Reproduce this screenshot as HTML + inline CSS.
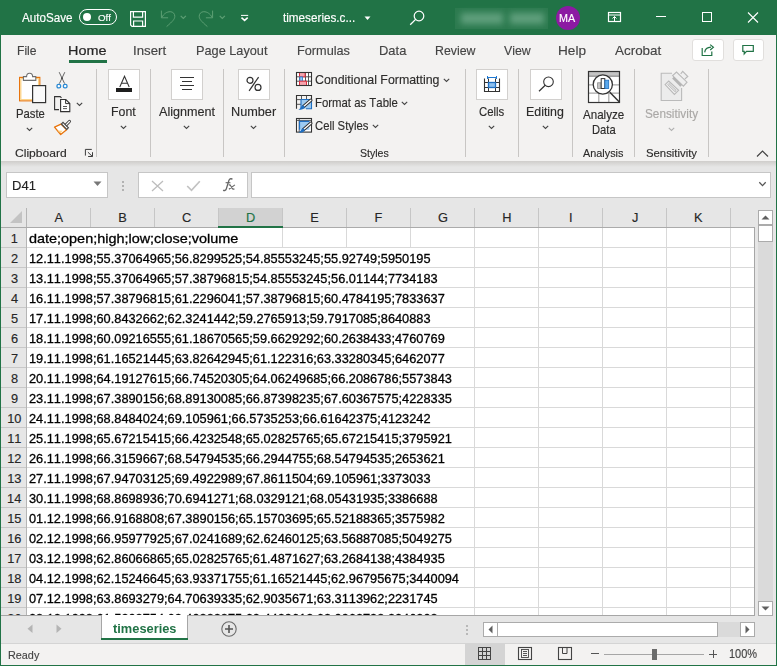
<!DOCTYPE html>
<html><head><meta charset="utf-8"><title>timeseries.csv - Excel</title>
<style>
html,body{margin:0;padding:0}
body{width:777px;height:666px;overflow:hidden;position:relative;background:#e6e6e6;font-family:"Liberation Sans",sans-serif;font-kerning:none}
.a{position:absolute;box-sizing:border-box;display:block}
.t{position:absolute;white-space:nowrap;line-height:1;font-kerning:none}
</style></head><body>
<div class="a" style="left:0px;top:0px;width:777px;height:666px;background:#e6e6e6"></div>
<div class="a" style="left:0px;top:0px;width:777px;height:35px;background:#217346"></div>
<div class="t" style="left:21.98px;top:11.59px;font-size:12.30px;color:#fff;transform:scaleX(0.9476);transform-origin:0 0;-webkit-text-stroke:0.15px #fff;">AutoSave</div>
<div class="a" style="left:79px;top:9px;width:38px;height:16px;border:1px solid #fff;border-radius:8px"></div>
<div class="a" style="left:83px;top:13px;width:8px;height:8px;background:#fff;border-radius:50%"></div>
<div class="t" style="left:97.74px;top:13.00px;font-size:9.80px;color:#fff;transform:scaleX(0.9906);transform-origin:0 0;-webkit-text-stroke:0.15px #fff;">Off</div>
<svg class="a" style="left:130px;top:11px;" width="16" height="16" viewBox="0 0 16 16"><path d="M0.6 0.6H15.4V15.4H2L0.6 14Z" fill="none" stroke="#fff" stroke-width="1.2"/><path d="M3.4 0.6V6.2H12.6V0.6" fill="none" stroke="#fff" stroke-width="1.2"/><path d="M3.6 15.4V10H12.6V15.4" fill="none" stroke="#fff" stroke-width="1.2"/></svg>
<svg class="a" style="left:197px;top:10px;" width="17" height="18" viewBox="0 0 17 18"><path d="M15.6 0.6V7.8H8.9" fill="none" stroke="#5d9f74" stroke-width="1"/><path d="M15.2 7.4C13 3.5 10 1.7 6.8 1.7C3.8 1.7 2.2 4 2.2 6.3C2.2 9 4 11 10.4 16.6" fill="none" stroke="#5d9f74" stroke-width="1"/></svg>
<svg class="a" style="left:160px;top:10px;" width="17" height="18" viewBox="0 0 17 18"><g transform="translate(17 0) scale(-1 1)"><path d="M15.6 0.6V7.8H8.9" fill="none" stroke="#5d9f74" stroke-width="1"/><path d="M15.2 7.4C13 3.5 10 1.7 6.8 1.7C3.8 1.7 2.2 4 2.2 6.3C2.2 9 4 11 10.4 16.6" fill="none" stroke="#5d9f74" stroke-width="1"/></g></svg>
<svg class="a" style="left:180px;top:15px;" width="7" height="5" viewBox="0 0 7 5"><path d="M0.7 0.8L3.3 3.4L5.9 0.8" fill="none" stroke="#5d9f74" stroke-width="1.2"/></svg>
<svg class="a" style="left:219px;top:15px;" width="7" height="5" viewBox="0 0 7 5"><path d="M0.7 0.8L3.3 3.4L5.9 0.8" fill="none" stroke="#5d9f74" stroke-width="1.2"/></svg>
<svg class="a" style="left:240px;top:14px;" width="9" height="8" viewBox="0 0 9 8"><path d="M1 1.4H8.2" stroke="#fff" stroke-width="1"/><path d="M1.5 3.6L4.6 6.4L7.7 3.6" fill="none" stroke="#fff" stroke-width="1.5"/></svg>
<div class="t" style="left:282.82px;top:11.59px;font-size:12.30px;color:#fff;transform:scaleX(0.9523);transform-origin:0 0;-webkit-text-stroke:0.15px #fff;">timeseries.c...</div>
<svg class="a" style="left:364px;top:16px;" width="7" height="5" viewBox="0 0 7 5"><path d="M0.5 0.5H6.5L3.5 4Z" fill="#fff"/></svg>
<svg class="a" style="left:409px;top:10px;" width="16" height="16" viewBox="0 0 16 16"><circle cx="10" cy="6" r="4.8" fill="none" stroke="#fff" stroke-width="1.2"/><path d="M6.6 9.4L1.2 14.8" stroke="#fff" stroke-width="1.3"/></svg>
<div class="a" style="left:455px;top:8px;width:93px;height:21px;background:#2c7a4f"></div>
<div class="a" style="left:461px;top:13px;width:42px;height:11px;background:#68a684;filter:blur(3px);opacity:.85"></div>
<div class="a" style="left:510px;top:13px;width:34px;height:11px;background:#68a684;filter:blur(3px);opacity:.85"></div>
<div class="a" style="left:556px;top:6px;width:24px;height:24px;background:#8c1aa3;border-radius:50%"></div>
<div class="t" style="left:559.12px;top:12.71px;font-size:10.50px;color:#fff;transform:scaleX(1.0223);transform-origin:0 0;-webkit-text-stroke:0.15px #fff;">MA</div>
<svg class="a" style="left:607px;top:11px;" width="15" height="12" viewBox="0 0 15 12"><rect x="1.5" y="1.5" width="12" height="9" fill="none" stroke="#fff" stroke-width="1.2"/><path d="M1.5 4H13.5" stroke="#fff" stroke-width="1"/><path d="M7.5 10V5.5M5.5 7.5L7.5 5.5L9.5 7.5" fill="none" stroke="#fff" stroke-width="1"/></svg>
<div class="a" style="left:656px;top:16px;width:10px;height:1px;background:#fff"></div>
<div class="a" style="left:702px;top:12px;width:10px;height:10px;border:1px solid #fff"></div>
<svg class="a" style="left:747px;top:12px;" width="12" height="11" viewBox="0 0 12 11"><path d="M1 0.5L11 10.5M11 0.5L1 10.5" stroke="#fff" stroke-width="1.1"/></svg>
<div class="a" style="left:1px;top:35px;width:775px;height:126px;background:#f3f2f1"></div>
<div class="t" style="left:17.41px;top:44.22px;font-size:13.20px;color:#444;transform:scaleX(0.9184);transform-origin:0 0;-webkit-text-stroke:0.15px #444;">File</div>
<div class="t" style="left:68.02px;top:44.22px;font-size:13.20px;color:#262626;transform:scaleX(1.0942);transform-origin:0 0;-webkit-text-stroke:0.2px #262626;">Home</div>
<div class="t" style="left:132.68px;top:44.22px;font-size:13.20px;color:#444;transform:scaleX(1.0032);transform-origin:0 0;-webkit-text-stroke:0.15px #444;">Insert</div>
<div class="t" style="left:196.16px;top:44.22px;font-size:13.20px;color:#444;transform:scaleX(0.9651);transform-origin:0 0;-webkit-text-stroke:0.15px #444;">Page Layout</div>
<div class="t" style="left:297.46px;top:44.22px;font-size:13.20px;color:#444;transform:scaleX(0.9635);transform-origin:0 0;-webkit-text-stroke:0.15px #444;">Formulas</div>
<div class="t" style="left:378.94px;top:44.22px;font-size:13.20px;color:#444;transform:scaleX(0.9814);transform-origin:0 0;-webkit-text-stroke:0.15px #444;">Data</div>
<div class="t" style="left:435.29px;top:44.22px;font-size:13.20px;color:#444;transform:scaleX(0.9354);transform-origin:0 0;-webkit-text-stroke:0.15px #444;">Review</div>
<div class="t" style="left:503.95px;top:44.22px;font-size:13.20px;color:#444;transform:scaleX(0.9341);transform-origin:0 0;-webkit-text-stroke:0.15px #444;">View</div>
<div class="t" style="left:557.88px;top:44.22px;font-size:13.20px;color:#444;transform:scaleX(1.0309);transform-origin:0 0;-webkit-text-stroke:0.15px #444;">Help</div>
<div class="t" style="left:614.77px;top:44.22px;font-size:13.20px;color:#444;transform:scaleX(1.0183);transform-origin:0 0;-webkit-text-stroke:0.15px #444;">Acrobat</div>
<div class="a" style="left:69px;top:60px;width:38px;height:3px;background:#217346"></div>
<div class="a" style="left:692px;top:39px;width:32px;height:22px;background:#fff;border:1px solid #e1dfdd;border-radius:3px"></div>
<svg class="a" style="left:700px;top:42px;" width="16" height="16" viewBox="0 0 16 16"><path d="M2.2 5.9V13.5H11.8V9.4" fill="none" stroke="#217346" stroke-width="1.2"/><path d="M4.7 10.4C5 7.4 7 5.4 11 5.2" fill="none" stroke="#217346" stroke-width="1.2"/><path d="M10.2 2.6L13.4 5.3L10.2 8" fill="none" stroke="#217346" stroke-width="1.2"/></svg>
<div class="a" style="left:733px;top:39px;width:31px;height:22px;background:#fff;border:1px solid #e1dfdd;border-radius:3px"></div>
<svg class="a" style="left:741px;top:43px;" width="15" height="14" viewBox="0 0 15 14"><path d="M1.8 2.5H12.3V8.4H5.5L3.2 11V8.4H1.8Z" fill="none" stroke="#217346" stroke-width="1.2"/></svg>
<div class="a" style="left:96px;top:69px;width:1px;height:88px;background:#c8c6c4"></div>
<div class="a" style="left:150px;top:69px;width:1px;height:88px;background:#c8c6c4"></div>
<div class="a" style="left:223px;top:69px;width:1px;height:88px;background:#c8c6c4"></div>
<div class="a" style="left:284px;top:69px;width:1px;height:88px;background:#c8c6c4"></div>
<div class="a" style="left:465px;top:69px;width:1px;height:88px;background:#c8c6c4"></div>
<div class="a" style="left:518px;top:69px;width:1px;height:88px;background:#c8c6c4"></div>
<div class="a" style="left:572px;top:69px;width:1px;height:88px;background:#c8c6c4"></div>
<div class="a" style="left:634px;top:69px;width:1px;height:88px;background:#c8c6c4"></div>
<div class="a" style="left:708px;top:69px;width:1px;height:88px;background:#c8c6c4"></div>
<svg class="a" style="left:17px;top:71px;" width="31" height="33" viewBox="0 0 31 33"><rect x="2.6" y="6.4" width="20.2" height="23.4" fill="#fff" stroke="#e8740c" stroke-width="1.2"/>
<path d="M3.8 7.6H21.6V14M3.8 7.6V28.6H15" fill="none" stroke="#fcd48a" stroke-width="1.3"/>
<path d="M6.4 9.4V5.6H9.6C9.6 3.4 10.8 2.2 12.6 2.2C14.4 2.2 15.6 3.4 15.6 5.6H18.8V9.4Z" fill="#fff" stroke="#6e6e6e" stroke-width="1.1"/>
<rect x="15.6" y="14.6" width="13" height="17" fill="#fafafa" stroke="#333" stroke-width="1.2"/></svg>
<div class="t" style="left:15.78px;top:108.16px;font-size:12.80px;color:#2d2c2b;transform:scaleX(0.8807);transform-origin:0 0;-webkit-text-stroke:0.15px #2d2c2b;">Paste</div>
<svg class="a" style="left:26px;top:127px;" width="7" height="5" viewBox="0 0 7 5"><path d="M0.8 0.8L3.5 3.5L6.2 0.8" fill="none" stroke="#444" stroke-width="1.1"/></svg>
<svg class="a" style="left:55px;top:71px;" width="14" height="18" viewBox="0 0 14 18"><path d="M4.2 1.2L9.6 12.6M9.8 1.2L4.4 12.6" stroke="#555" stroke-width="0.9"/><circle cx="7" cy="7.2" r="0.9" fill="#444"/><rect x="2" y="13.3" width="3.6" height="3.6" rx="1.4" fill="#fff" stroke="#2a8ad4" stroke-width="1.3"/><rect x="8.4" y="13.3" width="3.6" height="3.6" rx="1.4" fill="#fff" stroke="#2a8ad4" stroke-width="1.3"/></svg>
<svg class="a" style="left:52px;top:94px;" width="20" height="20" viewBox="0 0 20 20"><path d="M7 15.6H2.6V2.6H8.2L9.5 3.8" fill="none" stroke="#333" stroke-width="1.1"/><path d="M8.6 5.5H13.8L17.8 9.5V17.6H8.6Z" fill="#fff" stroke="#333" stroke-width="1.1"/><path d="M13.6 5.5V9.6H17.8" fill="none" stroke="#333" stroke-width="1"/><path d="M11 12.5H15M11 14.6H15" stroke="#444" stroke-width="0.9"/></svg>
<svg class="a" style="left:76px;top:102px;" width="7" height="5" viewBox="0 0 7 5"><path d="M0.8 0.8L3.5 3.5L6.2 0.8" fill="none" stroke="#444" stroke-width="1.1"/></svg>
<svg class="a" style="left:52px;top:118px;" width="20" height="19" viewBox="0 0 20 19"><path d="M2.5 9.2L9 6.1L14.6 11.7L8.7 16.5Z" fill="#fff" stroke="#e8740c" stroke-width="1.3" stroke-linejoin="round"/><path d="M5.2 12.6L10.6 12.8L8.6 15.2Z" fill="#fcd48a"/><path d="M13.6 7.4L17.4 3.5" stroke="#444" stroke-width="3.2" stroke-linecap="round"/><path d="M13.6 7.4L17.4 3.5" stroke="#fff" stroke-width="1.2" stroke-linecap="round"/><path d="M9.4 6L14.8 11.4L16.4 9.8L11 4.4Z" fill="#fff" stroke="#444" stroke-width="1.1"/></svg>
<div class="t" style="left:14.89px;top:146.78px;font-size:11.60px;color:#2d2c2b;transform:scaleX(1.0411);transform-origin:0 0;-webkit-text-stroke:0.15px #2d2c2b;">Clipboard</div>
<svg class="a" style="left:84px;top:148px;" width="10" height="10" viewBox="0 0 10 10"><path d="M1.4 7.6V1.4H7.8M3.9 4.2L8.3 8.4M8.5 4.2V8.5H4.1" fill="none" stroke="#333" stroke-width="0.95"/></svg>
<div class="a" style="left:108px;top:69px;width:32px;height:31px;background:#fff;border:1px solid #d2d0ce"></div>
<svg class="a" style="left:118px;top:75px;" width="14" height="13" viewBox="0 0 14 13"><path d="M1.8 12L6.5 1.2L11.2 12M3.6 8.2H9.4" fill="none" stroke="#333" stroke-width="1.05"/></svg>
<div class="a" style="left:116px;top:88px;width:16px;height:4px;background:#1e1e1e"></div>
<div class="t" style="left:110.99px;top:106.16px;font-size:12.80px;color:#2d2c2b;transform:scaleX(0.9645);transform-origin:0 0;-webkit-text-stroke:0.15px #2d2c2b;">Font</div>
<svg class="a" style="left:120px;top:125px;" width="7" height="5" viewBox="0 0 7 5"><path d="M0.8 0.8L3.5 3.5L6.2 0.8" fill="none" stroke="#444" stroke-width="1.1"/></svg>
<div class="a" style="left:171px;top:69px;width:32px;height:31px;background:#fff;border:1px solid #d2d0ce"></div>
<svg class="a" style="left:179px;top:76px;" width="16" height="15" viewBox="0 0 16 15"><path d="M1 1.5H15M3 5.5H13M1 9.5H15M3 13.5H13" stroke="#333" stroke-width="1"/></svg>
<div class="t" style="left:158.98px;top:106.16px;font-size:12.80px;color:#2d2c2b;transform:scaleX(0.9859);transform-origin:0 0;-webkit-text-stroke:0.15px #2d2c2b;">Alignment</div>
<svg class="a" style="left:183px;top:125px;" width="7" height="5" viewBox="0 0 7 5"><path d="M0.8 0.8L3.5 3.5L6.2 0.8" fill="none" stroke="#444" stroke-width="1.1"/></svg>
<div class="a" style="left:238px;top:69px;width:32px;height:31px;background:#fff;border:1px solid #d2d0ce"></div>
<svg class="a" style="left:244px;top:73px;" width="20" height="20" viewBox="0 0 20 20"><circle cx="6" cy="7.3" r="3" fill="none" stroke="#333" stroke-width="1.2"/><circle cx="14" cy="14.4" r="3" fill="none" stroke="#333" stroke-width="1.2"/><path d="M14.6 4.1L5.1 17.9" stroke="#333" stroke-width="1.2"/></svg>
<div class="t" style="left:231.26px;top:106.16px;font-size:12.80px;color:#2d2c2b;transform:scaleX(0.9918);transform-origin:0 0;-webkit-text-stroke:0.15px #2d2c2b;">Number</div>
<svg class="a" style="left:250px;top:125px;" width="7" height="5" viewBox="0 0 7 5"><path d="M0.8 0.8L3.5 3.5L6.2 0.8" fill="none" stroke="#444" stroke-width="1.1"/></svg>
<svg class="a" style="left:295px;top:71px;" width="18" height="16" viewBox="0 0 18 16"><rect x="1.5" y="1.5" width="15" height="13" fill="#fff"/>
<path d="M4.5 1.5V14.5M10.5 1.5V14.5M13.5 1.5V14.5M1.5 5.8H16.5M1.5 10.2H16.5" stroke="#444" stroke-width="0.9"/>
<rect x="4.5" y="1.5" width="5.6" height="4.3" fill="#f6a3ad" stroke="#e02f3f" stroke-width="1"/>
<rect x="4.8" y="5.9" width="2.6" height="4.2" fill="#9ccaf2" stroke="#2a7ed0" stroke-width="0.9"/>
<rect x="4.5" y="10.2" width="7" height="4.3" fill="#f6a3ad" stroke="#e02f3f" stroke-width="1"/>
<rect x="1.5" y="1.5" width="15" height="13" fill="none" stroke="#333" stroke-width="1.1"/></svg>
<div class="t" style="left:314.87px;top:73.76px;font-size:12.80px;color:#2d2c2b;transform:scaleX(0.9670);transform-origin:0 0;-webkit-text-stroke:0.15px #2d2c2b;">Conditional Formatting</div>
<svg class="a" style="left:442.5px;top:77.5px;" width="7" height="5" viewBox="0 0 7 5"><path d="M0.8 0.8L3.5 3.5L6.2 0.8" fill="none" stroke="#444" stroke-width="1.1"/></svg>
<svg class="a" style="left:295px;top:94px;" width="18" height="17" viewBox="0 0 18 17"><path d="M1.5 14.7V1.5H16.5V5.5" fill="none" stroke="#333" stroke-width="1.1"/>
<path d="M6.5 1.5V5.5M11.5 1.5V5.5M1.5 5.6H6M1.5 10.3H6" stroke="#444" stroke-width="0.9"/>
<rect x="6" y="5.5" width="10.5" height="9.2" fill="#9dcbf2"/><path d="M6 14.7V5.5H16.5V14.7H11" fill="none" stroke="#1f6fc2" stroke-width="1.1"/><path d="M15.8 6.3L8.6 12.6" stroke="#333" stroke-width="3.3" stroke-linecap="round"/><path d="M15.8 6.3L8.6 12.6" stroke="#fff" stroke-width="1.3" stroke-linecap="round"/><path d="M3.4 15.9C6.4 15.9 9.4 15 9.9 12.8L8.2 11.3C6.2 11.9 5.6 14.6 3.4 15.9Z" fill="#1f6fc2"/></svg>
<div class="t" style="left:314.57px;top:97.36px;font-size:12.80px;color:#2d2c2b;transform:scaleX(0.8889);transform-origin:0 0;-webkit-text-stroke:0.15px #2d2c2b;">Format as Table</div>
<svg class="a" style="left:400.5px;top:100.5px;" width="7" height="5" viewBox="0 0 7 5"><path d="M0.8 0.8L3.5 3.5L6.2 0.8" fill="none" stroke="#444" stroke-width="1.1"/></svg>
<svg class="a" style="left:295px;top:117px;" width="18" height="17" viewBox="0 0 18 17"><rect x="1.5" y="1.5" width="15" height="13.6" fill="#fff" stroke="#333" stroke-width="1.1"/><path d="M1.5 3.4H16.5M4.2 1.5V15" stroke="#444" stroke-width="0.9"/>
<rect x="4.5" y="4.4" width="10" height="8.4" fill="#9dcbf2"/><path d="M4.5 12.8V4.4H14.5" fill="none" stroke="#1f6fc2" stroke-width="1.2"/><path d="M15.8 6.3L8.6 12.6" stroke="#333" stroke-width="3.3" stroke-linecap="round"/><path d="M15.8 6.3L8.6 12.6" stroke="#fff" stroke-width="1.3" stroke-linecap="round"/><path d="M3.4 15.9C6.4 15.9 9.4 15 9.9 12.8L8.2 11.3C6.2 11.9 5.6 14.6 3.4 15.9Z" fill="#1f6fc2"/></svg>
<div class="t" style="left:314.93px;top:120.16px;font-size:12.80px;color:#2d2c2b;transform:scaleX(0.8829);transform-origin:0 0;-webkit-text-stroke:0.15px #2d2c2b;">Cell Styles</div>
<svg class="a" style="left:371.5px;top:123.5px;" width="7" height="5" viewBox="0 0 7 5"><path d="M0.8 0.8L3.5 3.5L6.2 0.8" fill="none" stroke="#444" stroke-width="1.1"/></svg>
<div class="t" style="left:360.22px;top:146.78px;font-size:11.60px;color:#2d2c2b;transform:scaleX(0.9105);transform-origin:0 0;-webkit-text-stroke:0.15px #2d2c2b;">Styles</div>
<div class="a" style="left:476px;top:69px;width:32px;height:31px;background:#fff;border:1px solid #d2d0ce"></div>
<svg class="a" style="left:482px;top:75px;" width="20" height="18" viewBox="0 0 20 18"><path d="M5.5 2.5H14.5M5.5 1V4M14.5 1V4" stroke="#1f78d1" stroke-width="1"/>
<path d="M2.5 3.5V16.5H17.5V3.5" fill="none" stroke="#333" stroke-width="1.1"/><path d="M6.5 3.5V16.5M13.5 3.5V16.5M2.5 7.5H17.5M2.5 12.5H17.5" stroke="#333" stroke-width="1"/>
<rect x="6.5" y="7.5" width="7" height="5" fill="#8ec0ee" stroke="#1f6fc2" stroke-width="1.3"/></svg>
<div class="t" style="left:479.02px;top:106.16px;font-size:12.80px;color:#2d2c2b;transform:scaleX(0.8889);transform-origin:0 0;-webkit-text-stroke:0.15px #2d2c2b;">Cells</div>
<svg class="a" style="left:488px;top:125px;" width="7" height="5" viewBox="0 0 7 5"><path d="M0.8 0.8L3.5 3.5L6.2 0.8" fill="none" stroke="#444" stroke-width="1.1"/></svg>
<div class="a" style="left:530px;top:69px;width:32px;height:31px;background:#fff;border:1px solid #d2d0ce"></div>
<svg class="a" style="left:538px;top:76px;" width="17" height="16" viewBox="0 0 17 16"><circle cx="10.5" cy="5.8" r="4.8" fill="none" stroke="#333" stroke-width="1.1"/><path d="M7.2 9.2L1 15.2" stroke="#333" stroke-width="1.2"/></svg>
<div class="t" style="left:526.48px;top:106.16px;font-size:12.80px;color:#2d2c2b;transform:scaleX(0.9688);transform-origin:0 0;-webkit-text-stroke:0.15px #2d2c2b;">Editing</div>
<svg class="a" style="left:542px;top:125px;" width="7" height="5" viewBox="0 0 7 5"><path d="M0.8 0.8L3.5 3.5L6.2 0.8" fill="none" stroke="#444" stroke-width="1.1"/></svg>
<svg class="a" style="left:587px;top:70px;" width="34" height="34" viewBox="0 0 34 34"><rect x="1.5" y="1.5" width="31" height="31" fill="#fff"/>
<rect x="1.5" y="1.5" width="31" height="4.6" fill="#c4c4c4"/><path d="M1.5 6.2H32.5" stroke="#7a7a7a" stroke-width="1"/>
<path d="M1.5 14.8H32.5M1.5 23.2H32.5M11.8 23.2V32.5M21.8 23.2V32.5" stroke="#a8a8a8" stroke-width="1.2"/>
<rect x="1.5" y="1.5" width="31" height="31" fill="none" stroke="#333" stroke-width="1.2"/>
<circle cx="15.8" cy="14.5" r="9.6" fill="#fff" stroke="#333" stroke-width="1.3"/>
<path d="M22.8 22.3L32.6 32.2" stroke="#333" stroke-width="1.5"/>
<rect x="10.6" y="12.8" width="3.5" height="5.7" fill="#c4c4c4" stroke="#8a8a8a" stroke-width="0.8"/>
<rect x="14.2" y="8.6" width="3.6" height="9.9" fill="#fff" stroke="#333" stroke-width="1"/>
<rect x="17.9" y="10.2" width="3.8" height="8.3" fill="#5aa8ec" stroke="#1f6fc2" stroke-width="0.8"/></svg>
<div class="t" style="left:583.28px;top:109.46px;font-size:12.80px;color:#2d2c2b;transform:scaleX(0.9056);transform-origin:0 0;-webkit-text-stroke:0.15px #2d2c2b;">Analyze</div>
<div class="t" style="left:591.68px;top:124.06px;font-size:12.80px;color:#2d2c2b;transform:scaleX(0.8735);transform-origin:0 0;-webkit-text-stroke:0.15px #2d2c2b;">Data</div>
<div class="t" style="left:583.28px;top:146.78px;font-size:11.60px;color:#2d2c2b;transform:scaleX(0.9356);transform-origin:0 0;-webkit-text-stroke:0.15px #2d2c2b;">Analysis</div>
<svg class="a" style="left:658px;top:70px;" width="32" height="32" viewBox="0 0 32 32"><path d="M3.2 3.2H14L23.6 13V30.5H3.2Z" fill="#ececec"/>
<path d="M14 3.2H3.2V30.5H23.6V17.9" fill="none" stroke="#bababa" stroke-width="1.1"/>
<path d="M7.1 14.6L10.7 11L20.6 20.3L16.4 24.5Z" fill="#efefef" stroke="#b9b9b9" stroke-width="1.1"/>
<path d="M9.8 14.6L10.9 13.5L18.2 20.5L17 21.6Z" fill="none" stroke="#b4b4b4" stroke-width="1"/>
<path d="M14.6 5.6L18.5 2L29 12.2L25.4 16.1Z" fill="#efefef" stroke="#b9b9b9" stroke-width="1.1"/>
<path d="M15 7.6L23.2 15.8" stroke="#b4b4b4" stroke-width="2.4"/>
<path d="M22.7 3.8L24.7 1.4L29.8 6.5L26.8 9" fill="#efefef" stroke="#b9b9b9" stroke-width="1.1"/></svg>
<div class="t" style="left:644.86px;top:107.66px;font-size:12.80px;color:#aaa8a6;transform:scaleX(0.9209);transform-origin:0 0;-webkit-text-stroke:0.15px #aaa8a6;">Sensitivity</div>
<svg class="a" style="left:668px;top:127px;" width="7" height="5" viewBox="0 0 7 5"><path d="M0.8 0.8L3.5 3.5L6.2 0.8" fill="none" stroke="#b0b0b0" stroke-width="1.1"/></svg>
<div class="t" style="left:645.99px;top:146.78px;font-size:11.60px;color:#2d2c2b;transform:scaleX(0.9774);transform-origin:0 0;-webkit-text-stroke:0.15px #2d2c2b;">Sensitivity</div>
<svg class="a" style="left:756px;top:150px;" width="13" height="8" viewBox="0 0 13 8"><path d="M1 6.5L6.5 1L12 6.5" fill="none" stroke="#444" stroke-width="1.2"/></svg>
<div class="a" style="left:1px;top:161px;width:775px;height:6px;background:linear-gradient(#cfcdcb,#e6e6e6)"></div>
<div class="a" style="left:6px;top:172px;width:102px;height:26px;background:#fff;border:1px solid #c6c6c6"></div>
<div class="t" style="left:12.33px;top:180.26px;font-size:12.80px;color:#222;transform:scaleX(1.0181);transform-origin:0 0;-webkit-text-stroke:0.15px #222;">D41</div>
<svg class="a" style="left:93px;top:181px;" width="9" height="6" viewBox="0 0 9 6"><path d="M0.5 0.5H8.5L4.5 5Z" fill="#777"/></svg>
<div class="a" style="left:122px;top:180.5px;width:2px;height:2px;background:#a0a0a0;border-radius:1px"></div>
<div class="a" style="left:122px;top:184.5px;width:2px;height:2px;background:#a0a0a0;border-radius:1px"></div>
<div class="a" style="left:122px;top:188.5px;width:2px;height:2px;background:#a0a0a0;border-radius:1px"></div>
<div class="a" style="left:138px;top:172px;width:110px;height:26px;background:#fff;border:1px solid #c6c6c6"></div>
<svg class="a" style="left:151px;top:180px;" width="13" height="12" viewBox="0 0 13 12"><path d="M1 1L12 11M12 1L1 11" stroke="#bdbdbd" stroke-width="1.3"/></svg>
<svg class="a" style="left:186px;top:179px;" width="15" height="13" viewBox="0 0 15 13"><path d="M1.2 7L5.5 11.3L13.8 2.2" fill="none" stroke="#c2c2c2" stroke-width="1.7"/></svg>
<svg class="a" style="left:220px;top:176px;" width="18" height="18" viewBox="0 0 18 18"><path d="M12.4 3.4C11.7 2.4 9.6 2.3 8.9 4.4L6.4 12.6C5.9 14.5 4.4 15 3.2 14.1" fill="none" stroke="#666" stroke-width="1.35"/><path d="M5.6 6.7H10.4" stroke="#666" stroke-width="1.1"/><path d="M8.6 9C9.8 8.6 10.4 9 10.9 10L12.2 12.4C12.6 13.1 13.3 13.3 14.4 12.9M14.9 8.9L8.9 13.2" fill="none" stroke="#666" stroke-width="1.15"/></svg>
<div class="a" style="left:251px;top:172px;width:520px;height:26px;background:#fff;border:1px solid #c6c6c6"></div>
<svg class="a" style="left:758px;top:181px;" width="9" height="7" viewBox="0 0 9 7"><path d="M1.3 1.3L4.5 4.6L7.7 1.3" fill="none" stroke="#555" stroke-width="1.3"/></svg>
<div class="a" style="left:1px;top:208px;width:753px;height:20px;background:#e6e6e6"></div>
<svg class="a" style="left:8px;top:209px;" width="18" height="18" viewBox="0 0 18 18"><path d="M14 2V14H2Z" fill="#c3c3c3"/></svg>
<div class="a" style="left:26px;top:208px;width:1px;height:20px;background:#b5b5b5"></div>
<div class="a" style="left:90px;top:208px;width:1px;height:20px;background:#c6c6c6"></div>
<div class="a" style="left:154px;top:208px;width:1px;height:20px;background:#c6c6c6"></div>
<div class="a" style="left:218px;top:208px;width:1px;height:20px;background:#c6c6c6"></div>
<div class="a" style="left:219px;top:208px;width:63px;height:18px;background:#d2d2d2"></div>
<div class="a" style="left:219px;top:226px;width:64px;height:2px;background:#217346"></div>
<div class="a" style="left:282px;top:208px;width:1px;height:20px;background:#c6c6c6"></div>
<div class="a" style="left:346px;top:208px;width:1px;height:20px;background:#c6c6c6"></div>
<div class="a" style="left:410px;top:208px;width:1px;height:20px;background:#c6c6c6"></div>
<div class="a" style="left:474px;top:208px;width:1px;height:20px;background:#c6c6c6"></div>
<div class="a" style="left:538px;top:208px;width:1px;height:20px;background:#c6c6c6"></div>
<div class="a" style="left:602px;top:208px;width:1px;height:20px;background:#c6c6c6"></div>
<div class="a" style="left:666px;top:208px;width:1px;height:20px;background:#c6c6c6"></div>
<div class="a" style="left:730px;top:208px;width:1px;height:20px;background:#c6c6c6"></div>
<div class="a" style="left:1px;top:227px;width:753px;height:1px;background:#ababab"></div>
<div class="a" style="left:218px;top:226px;width:65px;height:2px;background:#217346"></div>
<div class="t" style="left:54.53px;top:212.16px;font-size:12.80px;color:#262626;-webkit-text-stroke:0.15px #262626;">A</div>
<div class="t" style="left:118.34px;top:212.16px;font-size:12.80px;color:#262626;-webkit-text-stroke:0.15px #262626;">B</div>
<div class="t" style="left:182.10px;top:212.16px;font-size:12.80px;color:#262626;-webkit-text-stroke:0.15px #262626;">C</div>
<div class="t" style="left:245.96px;top:212.16px;font-size:12.80px;color:#217346;-webkit-text-stroke:0.15px #217346;">D</div>
<div class="t" style="left:310.28px;top:212.16px;font-size:12.80px;color:#262626;-webkit-text-stroke:0.15px #262626;">E</div>
<div class="t" style="left:374.62px;top:212.16px;font-size:12.80px;color:#262626;-webkit-text-stroke:0.15px #262626;">F</div>
<div class="t" style="left:437.98px;top:212.16px;font-size:12.80px;color:#262626;-webkit-text-stroke:0.15px #262626;">G</div>
<div class="t" style="left:502.18px;top:212.16px;font-size:12.80px;color:#262626;-webkit-text-stroke:0.15px #262626;">H</div>
<div class="t" style="left:569.02px;top:212.16px;font-size:12.80px;color:#262626;-webkit-text-stroke:0.15px #262626;">I</div>
<div class="t" style="left:631.97px;top:212.16px;font-size:12.80px;color:#262626;-webkit-text-stroke:0.15px #262626;">J</div>
<div class="t" style="left:694.08px;top:212.16px;font-size:12.80px;color:#262626;-webkit-text-stroke:0.15px #262626;">K</div>
<div class="a" style="left:27px;top:228px;width:727px;height:387px;background:#fff"></div>
<div class="a" style="left:1px;top:228px;width:25px;height:387px;background:#e6e6e6"></div>
<div class="a" style="left:26px;top:228px;width:1px;height:387px;background:#b5b5b5"></div>
<div class="a" style="left:282px;top:228px;width:1px;height:20px;background:#d9d9d9"></div>
<div class="a" style="left:346px;top:228px;width:1px;height:20px;background:#d9d9d9"></div>
<div class="a" style="left:410px;top:228px;width:1px;height:20px;background:#d9d9d9"></div>
<div class="a" style="left:474px;top:228px;width:1px;height:20px;background:#d9d9d9"></div>
<div class="a" style="left:538px;top:228px;width:1px;height:20px;background:#d9d9d9"></div>
<div class="a" style="left:602px;top:228px;width:1px;height:20px;background:#d9d9d9"></div>
<div class="a" style="left:666px;top:228px;width:1px;height:20px;background:#d9d9d9"></div>
<div class="a" style="left:730px;top:228px;width:1px;height:20px;background:#d9d9d9"></div>
<div class="a" style="left:27px;top:247px;width:727px;height:1px;background:#d9d9d9"></div>
<div class="a" style="left:1px;top:247px;width:25px;height:1px;background:#c8c8c8"></div>
<div class="t" style="left:28.99px;top:231.57px;font-size:13.50px;color:#000;-webkit-text-stroke:0.3px #000;transform:scaleX(1.0683);transform-origin:0 0">date;open;high;low;close;volume</div>
<div class="t" style="left:10.77px;top:233.16px;font-size:12.80px;color:#262626;-webkit-text-stroke:0.15px #262626;">1</div>
<div class="a" style="left:474px;top:248px;width:1px;height:20px;background:#d9d9d9"></div>
<div class="a" style="left:538px;top:248px;width:1px;height:20px;background:#d9d9d9"></div>
<div class="a" style="left:602px;top:248px;width:1px;height:20px;background:#d9d9d9"></div>
<div class="a" style="left:666px;top:248px;width:1px;height:20px;background:#d9d9d9"></div>
<div class="a" style="left:730px;top:248px;width:1px;height:20px;background:#d9d9d9"></div>
<div class="a" style="left:27px;top:267px;width:727px;height:1px;background:#d9d9d9"></div>
<div class="a" style="left:1px;top:267px;width:25px;height:1px;background:#c8c8c8"></div>
<div class="t" style="left:28.63px;top:251.57px;font-size:13.50px;color:#000;-webkit-text-stroke:0.3px #000;transform:scaleX(0.9466);transform-origin:0 0">12.11.1998;55.37064965;56.8299525;54.85553245;55.92749;5950195</div>
<div class="t" style="left:10.94px;top:253.16px;font-size:12.80px;color:#262626;-webkit-text-stroke:0.15px #262626;">2</div>
<div class="a" style="left:474px;top:268px;width:1px;height:20px;background:#d9d9d9"></div>
<div class="a" style="left:538px;top:268px;width:1px;height:20px;background:#d9d9d9"></div>
<div class="a" style="left:602px;top:268px;width:1px;height:20px;background:#d9d9d9"></div>
<div class="a" style="left:666px;top:268px;width:1px;height:20px;background:#d9d9d9"></div>
<div class="a" style="left:730px;top:268px;width:1px;height:20px;background:#d9d9d9"></div>
<div class="a" style="left:27px;top:287px;width:727px;height:1px;background:#d9d9d9"></div>
<div class="a" style="left:1px;top:287px;width:25px;height:1px;background:#c8c8c8"></div>
<div class="t" style="left:28.63px;top:271.57px;font-size:13.50px;color:#000;-webkit-text-stroke:0.3px #000;transform:scaleX(0.9466);transform-origin:0 0">13.11.1998;55.37064965;57.38796815;54.85553245;56.01144;7734183</div>
<div class="t" style="left:10.98px;top:273.16px;font-size:12.80px;color:#262626;-webkit-text-stroke:0.15px #262626;">3</div>
<div class="a" style="left:474px;top:288px;width:1px;height:20px;background:#d9d9d9"></div>
<div class="a" style="left:538px;top:288px;width:1px;height:20px;background:#d9d9d9"></div>
<div class="a" style="left:602px;top:288px;width:1px;height:20px;background:#d9d9d9"></div>
<div class="a" style="left:666px;top:288px;width:1px;height:20px;background:#d9d9d9"></div>
<div class="a" style="left:730px;top:288px;width:1px;height:20px;background:#d9d9d9"></div>
<div class="a" style="left:27px;top:307px;width:727px;height:1px;background:#d9d9d9"></div>
<div class="a" style="left:1px;top:307px;width:25px;height:1px;background:#c8c8c8"></div>
<div class="t" style="left:28.63px;top:291.57px;font-size:13.50px;color:#000;-webkit-text-stroke:0.3px #000;transform:scaleX(0.9466);transform-origin:0 0">16.11.1998;57.38796815;61.2296041;57.38796815;60.4784195;7833637</div>
<div class="t" style="left:10.98px;top:293.16px;font-size:12.80px;color:#262626;-webkit-text-stroke:0.15px #262626;">4</div>
<div class="a" style="left:474px;top:308px;width:1px;height:20px;background:#d9d9d9"></div>
<div class="a" style="left:538px;top:308px;width:1px;height:20px;background:#d9d9d9"></div>
<div class="a" style="left:602px;top:308px;width:1px;height:20px;background:#d9d9d9"></div>
<div class="a" style="left:666px;top:308px;width:1px;height:20px;background:#d9d9d9"></div>
<div class="a" style="left:730px;top:308px;width:1px;height:20px;background:#d9d9d9"></div>
<div class="a" style="left:27px;top:327px;width:727px;height:1px;background:#d9d9d9"></div>
<div class="a" style="left:1px;top:327px;width:25px;height:1px;background:#c8c8c8"></div>
<div class="t" style="left:28.63px;top:311.57px;font-size:13.50px;color:#000;-webkit-text-stroke:0.3px #000;transform:scaleX(0.9466);transform-origin:0 0">17.11.1998;60.8432662;62.3241442;59.2765913;59.7917085;8640883</div>
<div class="t" style="left:10.95px;top:313.16px;font-size:12.80px;color:#262626;-webkit-text-stroke:0.15px #262626;">5</div>
<div class="a" style="left:474px;top:328px;width:1px;height:20px;background:#d9d9d9"></div>
<div class="a" style="left:538px;top:328px;width:1px;height:20px;background:#d9d9d9"></div>
<div class="a" style="left:602px;top:328px;width:1px;height:20px;background:#d9d9d9"></div>
<div class="a" style="left:666px;top:328px;width:1px;height:20px;background:#d9d9d9"></div>
<div class="a" style="left:730px;top:328px;width:1px;height:20px;background:#d9d9d9"></div>
<div class="a" style="left:27px;top:347px;width:727px;height:1px;background:#d9d9d9"></div>
<div class="a" style="left:1px;top:347px;width:25px;height:1px;background:#c8c8c8"></div>
<div class="t" style="left:28.63px;top:331.57px;font-size:13.50px;color:#000;-webkit-text-stroke:0.3px #000;transform:scaleX(0.9466);transform-origin:0 0">18.11.1998;60.09216555;61.18670565;59.6629292;60.2638433;4760769</div>
<div class="t" style="left:10.90px;top:333.16px;font-size:12.80px;color:#262626;-webkit-text-stroke:0.15px #262626;">6</div>
<div class="a" style="left:474px;top:348px;width:1px;height:20px;background:#d9d9d9"></div>
<div class="a" style="left:538px;top:348px;width:1px;height:20px;background:#d9d9d9"></div>
<div class="a" style="left:602px;top:348px;width:1px;height:20px;background:#d9d9d9"></div>
<div class="a" style="left:666px;top:348px;width:1px;height:20px;background:#d9d9d9"></div>
<div class="a" style="left:730px;top:348px;width:1px;height:20px;background:#d9d9d9"></div>
<div class="a" style="left:27px;top:367px;width:727px;height:1px;background:#d9d9d9"></div>
<div class="a" style="left:1px;top:367px;width:25px;height:1px;background:#c8c8c8"></div>
<div class="t" style="left:28.63px;top:351.57px;font-size:13.50px;color:#000;-webkit-text-stroke:0.3px #000;transform:scaleX(0.9466);transform-origin:0 0">19.11.1998;61.16521445;63.82642945;61.122316;63.33280345;6462077</div>
<div class="t" style="left:10.93px;top:353.16px;font-size:12.80px;color:#262626;-webkit-text-stroke:0.15px #262626;">7</div>
<div class="a" style="left:474px;top:368px;width:1px;height:20px;background:#d9d9d9"></div>
<div class="a" style="left:538px;top:368px;width:1px;height:20px;background:#d9d9d9"></div>
<div class="a" style="left:602px;top:368px;width:1px;height:20px;background:#d9d9d9"></div>
<div class="a" style="left:666px;top:368px;width:1px;height:20px;background:#d9d9d9"></div>
<div class="a" style="left:730px;top:368px;width:1px;height:20px;background:#d9d9d9"></div>
<div class="a" style="left:27px;top:387px;width:727px;height:1px;background:#d9d9d9"></div>
<div class="a" style="left:1px;top:387px;width:25px;height:1px;background:#c8c8c8"></div>
<div class="t" style="left:28.96px;top:371.57px;font-size:13.50px;color:#000;-webkit-text-stroke:0.3px #000;transform:scaleX(0.9466);transform-origin:0 0">20.11.1998;64.19127615;66.74520305;64.06249685;66.2086786;5573843</div>
<div class="t" style="left:10.94px;top:373.16px;font-size:12.80px;color:#262626;-webkit-text-stroke:0.15px #262626;">8</div>
<div class="a" style="left:474px;top:388px;width:1px;height:20px;background:#d9d9d9"></div>
<div class="a" style="left:538px;top:388px;width:1px;height:20px;background:#d9d9d9"></div>
<div class="a" style="left:602px;top:388px;width:1px;height:20px;background:#d9d9d9"></div>
<div class="a" style="left:666px;top:388px;width:1px;height:20px;background:#d9d9d9"></div>
<div class="a" style="left:730px;top:388px;width:1px;height:20px;background:#d9d9d9"></div>
<div class="a" style="left:27px;top:407px;width:727px;height:1px;background:#d9d9d9"></div>
<div class="a" style="left:1px;top:407px;width:25px;height:1px;background:#c8c8c8"></div>
<div class="t" style="left:28.96px;top:391.57px;font-size:13.50px;color:#000;-webkit-text-stroke:0.3px #000;transform:scaleX(0.9466);transform-origin:0 0">23.11.1998;67.3890156;68.89130085;66.87398235;67.60367575;4228335</div>
<div class="t" style="left:10.94px;top:393.16px;font-size:12.80px;color:#262626;-webkit-text-stroke:0.15px #262626;">9</div>
<div class="a" style="left:474px;top:408px;width:1px;height:20px;background:#d9d9d9"></div>
<div class="a" style="left:538px;top:408px;width:1px;height:20px;background:#d9d9d9"></div>
<div class="a" style="left:602px;top:408px;width:1px;height:20px;background:#d9d9d9"></div>
<div class="a" style="left:666px;top:408px;width:1px;height:20px;background:#d9d9d9"></div>
<div class="a" style="left:730px;top:408px;width:1px;height:20px;background:#d9d9d9"></div>
<div class="a" style="left:27px;top:427px;width:727px;height:1px;background:#d9d9d9"></div>
<div class="a" style="left:1px;top:427px;width:25px;height:1px;background:#c8c8c8"></div>
<div class="t" style="left:28.96px;top:411.57px;font-size:13.50px;color:#000;-webkit-text-stroke:0.3px #000;transform:scaleX(0.9466);transform-origin:0 0">24.11.1998;68.8484024;69.105961;66.5735253;66.61642375;4123242</div>
<div class="t" style="left:7.14px;top:413.16px;font-size:12.80px;color:#262626;-webkit-text-stroke:0.15px #262626;">10</div>
<div class="a" style="left:474px;top:428px;width:1px;height:20px;background:#d9d9d9"></div>
<div class="a" style="left:538px;top:428px;width:1px;height:20px;background:#d9d9d9"></div>
<div class="a" style="left:602px;top:428px;width:1px;height:20px;background:#d9d9d9"></div>
<div class="a" style="left:666px;top:428px;width:1px;height:20px;background:#d9d9d9"></div>
<div class="a" style="left:730px;top:428px;width:1px;height:20px;background:#d9d9d9"></div>
<div class="a" style="left:27px;top:447px;width:727px;height:1px;background:#d9d9d9"></div>
<div class="a" style="left:1px;top:447px;width:25px;height:1px;background:#c8c8c8"></div>
<div class="t" style="left:28.96px;top:431.57px;font-size:13.50px;color:#000;-webkit-text-stroke:0.3px #000;transform:scaleX(0.9466);transform-origin:0 0">25.11.1998;65.67215415;66.4232548;65.02825765;65.67215415;3795921</div>
<div class="t" style="left:7.21px;top:433.16px;font-size:12.80px;color:#262626;-webkit-text-stroke:0.15px #262626;">11</div>
<div class="a" style="left:474px;top:448px;width:1px;height:20px;background:#d9d9d9"></div>
<div class="a" style="left:538px;top:448px;width:1px;height:20px;background:#d9d9d9"></div>
<div class="a" style="left:602px;top:448px;width:1px;height:20px;background:#d9d9d9"></div>
<div class="a" style="left:666px;top:448px;width:1px;height:20px;background:#d9d9d9"></div>
<div class="a" style="left:730px;top:448px;width:1px;height:20px;background:#d9d9d9"></div>
<div class="a" style="left:27px;top:467px;width:727px;height:1px;background:#d9d9d9"></div>
<div class="a" style="left:1px;top:467px;width:25px;height:1px;background:#c8c8c8"></div>
<div class="t" style="left:28.96px;top:451.57px;font-size:13.50px;color:#000;-webkit-text-stroke:0.3px #000;transform:scaleX(0.9466);transform-origin:0 0">26.11.1998;66.3159667;68.54794535;66.2944755;68.54794535;2653621</div>
<div class="t" style="left:7.22px;top:453.16px;font-size:12.80px;color:#262626;-webkit-text-stroke:0.15px #262626;">12</div>
<div class="a" style="left:474px;top:468px;width:1px;height:20px;background:#d9d9d9"></div>
<div class="a" style="left:538px;top:468px;width:1px;height:20px;background:#d9d9d9"></div>
<div class="a" style="left:602px;top:468px;width:1px;height:20px;background:#d9d9d9"></div>
<div class="a" style="left:666px;top:468px;width:1px;height:20px;background:#d9d9d9"></div>
<div class="a" style="left:730px;top:468px;width:1px;height:20px;background:#d9d9d9"></div>
<div class="a" style="left:27px;top:487px;width:727px;height:1px;background:#d9d9d9"></div>
<div class="a" style="left:1px;top:487px;width:25px;height:1px;background:#c8c8c8"></div>
<div class="t" style="left:28.96px;top:471.57px;font-size:13.50px;color:#000;-webkit-text-stroke:0.3px #000;transform:scaleX(0.9466);transform-origin:0 0">27.11.1998;67.94703125;69.4922989;67.8611504;69.105961;3373033</div>
<div class="t" style="left:7.17px;top:473.16px;font-size:12.80px;color:#262626;-webkit-text-stroke:0.15px #262626;">13</div>
<div class="a" style="left:474px;top:488px;width:1px;height:20px;background:#d9d9d9"></div>
<div class="a" style="left:538px;top:488px;width:1px;height:20px;background:#d9d9d9"></div>
<div class="a" style="left:602px;top:488px;width:1px;height:20px;background:#d9d9d9"></div>
<div class="a" style="left:666px;top:488px;width:1px;height:20px;background:#d9d9d9"></div>
<div class="a" style="left:730px;top:488px;width:1px;height:20px;background:#d9d9d9"></div>
<div class="a" style="left:27px;top:507px;width:727px;height:1px;background:#d9d9d9"></div>
<div class="a" style="left:1px;top:507px;width:25px;height:1px;background:#c8c8c8"></div>
<div class="t" style="left:29.11px;top:491.57px;font-size:13.50px;color:#000;-webkit-text-stroke:0.3px #000;transform:scaleX(0.9466);transform-origin:0 0">30.11.1998;68.8698936;70.6941271;68.0329121;68.05431935;3386688</div>
<div class="t" style="left:7.08px;top:493.16px;font-size:12.80px;color:#262626;-webkit-text-stroke:0.15px #262626;">14</div>
<div class="a" style="left:474px;top:508px;width:1px;height:20px;background:#d9d9d9"></div>
<div class="a" style="left:538px;top:508px;width:1px;height:20px;background:#d9d9d9"></div>
<div class="a" style="left:602px;top:508px;width:1px;height:20px;background:#d9d9d9"></div>
<div class="a" style="left:666px;top:508px;width:1px;height:20px;background:#d9d9d9"></div>
<div class="a" style="left:730px;top:508px;width:1px;height:20px;background:#d9d9d9"></div>
<div class="a" style="left:27px;top:527px;width:727px;height:1px;background:#d9d9d9"></div>
<div class="a" style="left:1px;top:527px;width:25px;height:1px;background:#c8c8c8"></div>
<div class="t" style="left:29.10px;top:511.57px;font-size:13.50px;color:#000;-webkit-text-stroke:0.3px #000;transform:scaleX(0.9466);transform-origin:0 0">01.12.1998;66.9168808;67.3890156;65.15703695;65.52188365;3575982</div>
<div class="t" style="left:7.16px;top:513.16px;font-size:12.80px;color:#262626;-webkit-text-stroke:0.15px #262626;">15</div>
<div class="a" style="left:474px;top:528px;width:1px;height:20px;background:#d9d9d9"></div>
<div class="a" style="left:538px;top:528px;width:1px;height:20px;background:#d9d9d9"></div>
<div class="a" style="left:602px;top:528px;width:1px;height:20px;background:#d9d9d9"></div>
<div class="a" style="left:666px;top:528px;width:1px;height:20px;background:#d9d9d9"></div>
<div class="a" style="left:730px;top:528px;width:1px;height:20px;background:#d9d9d9"></div>
<div class="a" style="left:27px;top:547px;width:727px;height:1px;background:#d9d9d9"></div>
<div class="a" style="left:1px;top:547px;width:25px;height:1px;background:#c8c8c8"></div>
<div class="t" style="left:29.10px;top:531.57px;font-size:13.50px;color:#000;-webkit-text-stroke:0.3px #000;transform:scaleX(0.9466);transform-origin:0 0">02.12.1998;66.95977925;67.0241689;62.62460125;63.56887085;5049275</div>
<div class="t" style="left:7.17px;top:533.16px;font-size:12.80px;color:#262626;-webkit-text-stroke:0.15px #262626;">16</div>
<div class="a" style="left:474px;top:548px;width:1px;height:20px;background:#d9d9d9"></div>
<div class="a" style="left:538px;top:548px;width:1px;height:20px;background:#d9d9d9"></div>
<div class="a" style="left:602px;top:548px;width:1px;height:20px;background:#d9d9d9"></div>
<div class="a" style="left:666px;top:548px;width:1px;height:20px;background:#d9d9d9"></div>
<div class="a" style="left:730px;top:548px;width:1px;height:20px;background:#d9d9d9"></div>
<div class="a" style="left:27px;top:567px;width:727px;height:1px;background:#d9d9d9"></div>
<div class="a" style="left:1px;top:567px;width:25px;height:1px;background:#c8c8c8"></div>
<div class="t" style="left:29.10px;top:551.57px;font-size:13.50px;color:#000;-webkit-text-stroke:0.3px #000;transform:scaleX(0.9466);transform-origin:0 0">03.12.1998;62.86066865;65.02825765;61.4871627;63.2684138;4384935</div>
<div class="t" style="left:7.22px;top:553.16px;font-size:12.80px;color:#262626;-webkit-text-stroke:0.15px #262626;">17</div>
<div class="a" style="left:474px;top:568px;width:1px;height:20px;background:#d9d9d9"></div>
<div class="a" style="left:538px;top:568px;width:1px;height:20px;background:#d9d9d9"></div>
<div class="a" style="left:602px;top:568px;width:1px;height:20px;background:#d9d9d9"></div>
<div class="a" style="left:666px;top:568px;width:1px;height:20px;background:#d9d9d9"></div>
<div class="a" style="left:730px;top:568px;width:1px;height:20px;background:#d9d9d9"></div>
<div class="a" style="left:27px;top:587px;width:727px;height:1px;background:#d9d9d9"></div>
<div class="a" style="left:1px;top:587px;width:25px;height:1px;background:#c8c8c8"></div>
<div class="t" style="left:29.10px;top:571.57px;font-size:13.50px;color:#000;-webkit-text-stroke:0.3px #000;transform:scaleX(0.9466);transform-origin:0 0">04.12.1998;62.15246645;63.93371755;61.16521445;62.96795675;3440094</div>
<div class="t" style="left:7.17px;top:573.16px;font-size:12.80px;color:#262626;-webkit-text-stroke:0.15px #262626;">18</div>
<div class="a" style="left:474px;top:588px;width:1px;height:20px;background:#d9d9d9"></div>
<div class="a" style="left:538px;top:588px;width:1px;height:20px;background:#d9d9d9"></div>
<div class="a" style="left:602px;top:588px;width:1px;height:20px;background:#d9d9d9"></div>
<div class="a" style="left:666px;top:588px;width:1px;height:20px;background:#d9d9d9"></div>
<div class="a" style="left:730px;top:588px;width:1px;height:20px;background:#d9d9d9"></div>
<div class="a" style="left:27px;top:607px;width:727px;height:1px;background:#d9d9d9"></div>
<div class="a" style="left:1px;top:607px;width:25px;height:1px;background:#c8c8c8"></div>
<div class="t" style="left:29.10px;top:591.57px;font-size:13.50px;color:#000;-webkit-text-stroke:0.3px #000;transform:scaleX(0.9466);transform-origin:0 0">07.12.1998;63.8693279;64.70639335;62.9035671;63.3113962;2231745</div>
<div class="t" style="left:7.20px;top:593.16px;font-size:12.80px;color:#262626;-webkit-text-stroke:0.15px #262626;">19</div>
<div class="a" style="left:474px;top:608px;width:1px;height:7px;background:#d9d9d9"></div>
<div class="a" style="left:538px;top:608px;width:1px;height:7px;background:#d9d9d9"></div>
<div class="a" style="left:602px;top:608px;width:1px;height:7px;background:#d9d9d9"></div>
<div class="a" style="left:666px;top:608px;width:1px;height:7px;background:#d9d9d9"></div>
<div class="a" style="left:730px;top:608px;width:1px;height:7px;background:#d9d9d9"></div>
<div class="t" style="left:29.10px;top:611.57px;font-size:13.50px;color:#000;-webkit-text-stroke:0.3px #000;transform:scaleX(0.9466);transform-origin:0 0">08.12.1998;61.5308754;63.40882875;60.4429612;63.0962798;3046208</div>
<div class="t" style="left:7.31px;top:613.16px;font-size:12.80px;color:#262626;-webkit-text-stroke:0.15px #262626;">20</div>
<div class="a" style="left:754px;top:227px;width:1px;height:389px;background:#a6a6a6"></div>
<div class="a" style="left:1px;top:615px;width:754px;height:1px;background:#a6a6a6"></div>
<div class="a" style="left:755px;top:208px;width:21px;height:408px;background:#e6e6e6"></div>
<div class="a" style="left:758px;top:224px;width:15px;height:377px;background:#dadada"></div>
<div class="a" style="left:758px;top:210px;width:15px;height:15px;background:#fff;border:1px solid #ababab"></div>
<svg class="a" style="left:761px;top:213px;" width="9" height="9" viewBox="0 0 9 9"><path d="M0.5 6.5L4.5 2.5L8.5 6.5Z" fill="#606060"/></svg>
<div class="a" style="left:758px;top:225px;width:15px;height:17px;background:#fff;border:1px solid #ababab"></div>
<div class="a" style="left:758px;top:601px;width:15px;height:15px;background:#fff;border:1px solid #ababab"></div>
<svg class="a" style="left:761px;top:604px;" width="9" height="9" viewBox="0 0 9 9"><path d="M0.5 2.5L4.5 6.5L8.5 2.5Z" fill="#606060"/></svg>
<div class="a" style="left:1px;top:616px;width:775px;height:27px;background:#e6e6e6"></div>
<svg class="a" style="left:26px;top:624px;" width="8" height="10" viewBox="0 0 8 10"><path d="M6.5 0.5V9L1.5 4.8Z" fill="#b4b4b4"/></svg>
<svg class="a" style="left:55px;top:624px;" width="8" height="10" viewBox="0 0 8 10"><path d="M1.5 0.5V9L6.5 4.8Z" fill="#b4b4b4"/></svg>
<div class="a" style="left:101px;top:615px;width:87px;height:25px;background:#fff;border-left:1px solid #a6a6a6;border-right:1px solid #a6a6a6"></div>
<div class="a" style="left:101px;top:638px;width:87px;height:2px;background:#217346"></div>
<div class="t" style="left:112.84px;top:622.34px;font-size:13.30px;color:#217346;font-weight:700;transform:scaleX(0.9647);transform-origin:0 0;">timeseries</div>
<svg class="a" style="left:221px;top:621px;" width="16" height="16" viewBox="0 0 16 16"><circle cx="8" cy="8" r="7.2" fill="none" stroke="#6b6b6b" stroke-width="1.1"/><path d="M8 4V12M4 8H12" stroke="#555" stroke-width="1.6"/></svg>
<div class="a" style="left:466px;top:624.5px;width:2px;height:2px;background:#a8a8a8;border-radius:1px"></div>
<div class="a" style="left:466px;top:628.5px;width:2px;height:2px;background:#a8a8a8;border-radius:1px"></div>
<div class="a" style="left:466px;top:632.5px;width:2px;height:2px;background:#a8a8a8;border-radius:1px"></div>
<div class="a" style="left:483px;top:622px;width:272px;height:15px;background:#dadada"></div>
<div class="a" style="left:483px;top:622px;width:15px;height:15px;background:#fff;border:1px solid #ababab"></div>
<svg class="a" style="left:486px;top:625px;" width="9" height="9" viewBox="0 0 9 9"><path d="M6.5 0.5V8.5L2.5 4.5Z" fill="#606060"/></svg>
<div class="a" style="left:497px;top:622px;width:221px;height:15px;background:#fff;border:1px solid #ababab"></div>
<div class="a" style="left:740px;top:622px;width:15px;height:15px;background:#fff;border:1px solid #ababab"></div>
<svg class="a" style="left:743px;top:625px;" width="9" height="9" viewBox="0 0 9 9"><path d="M2.5 0.5V8.5L6.5 4.5Z" fill="#606060"/></svg>
<div class="a" style="left:1px;top:643px;width:775px;height:22px;background:#f3f2f1"></div>
<div class="a" style="left:1px;top:643px;width:775px;height:1px;background:#d4d4d4"></div>
<div class="t" style="left:7.71px;top:649.18px;font-size:11.60px;color:#444;transform:scaleX(0.9337);transform-origin:0 0;-webkit-text-stroke:0.15px #444;">Ready</div>
<div class="a" style="left:465px;top:644px;width:40px;height:21px;background:#d4d4d4"></div>
<svg class="a" style="left:477px;top:646px;" width="15" height="15" viewBox="0 0 15 15"><rect x="1.5" y="1.5" width="12" height="12" fill="none" stroke="#444" stroke-width="1"/><path d="M5.5 1.5V13.5M9.5 1.5V13.5M1.5 5.5H13.5M1.5 9.5H13.5" stroke="#444" stroke-width="1"/></svg>
<svg class="a" style="left:517px;top:646px;" width="16" height="15" viewBox="0 0 16 15"><rect x="1.5" y="1.5" width="13" height="12" fill="none" stroke="#444" stroke-width="1.1"/><rect x="4.5" y="3.5" width="7" height="8" fill="none" stroke="#444" stroke-width="0.9"/><path d="M6 5.5H10M6 7.5H10M6 9.5H10" stroke="#444" stroke-width="0.9"/></svg>
<svg class="a" style="left:557px;top:646px;" width="16" height="15" viewBox="0 0 16 15"><rect x="1.5" y="1.5" width="13" height="12" fill="none" stroke="#444" stroke-width="1.1"/><path d="M5.5 1.5V7.5H10V1.5" fill="none" stroke="#444" stroke-width="1"/></svg>
<div class="a" style="left:591px;top:653px;width:8px;height:1px;background:#555"></div>
<div class="a" style="left:604px;top:654px;width:100px;height:1px;background:#a6a6a6"></div>
<div class="a" style="left:652px;top:649px;width:5px;height:11px;background:#6b6b6b"></div>
<div class="a" style="left:709px;top:654px;width:8px;height:1px;background:#555"></div>
<div class="a" style="left:712.5px;top:650px;width:1px;height:8px;background:#555"></div>
<div class="t" style="left:729.46px;top:648.46px;font-size:12.80px;color:#444;transform:scaleX(0.8593);transform-origin:0 0;-webkit-text-stroke:0.15px #444;">100%</div>
<div class="a" style="left:0px;top:35px;width:1px;height:631px;background:#217346"></div>
<div class="a" style="left:776px;top:35px;width:1px;height:631px;background:#217346"></div>
<div class="a" style="left:0px;top:665px;width:777px;height:1px;background:#217346"></div>
</body></html>
